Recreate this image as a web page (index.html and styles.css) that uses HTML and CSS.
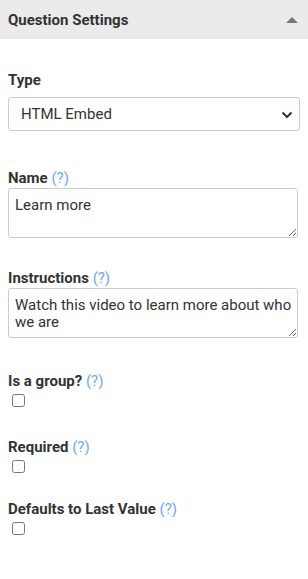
FILE: index.html
```html
<!DOCTYPE html>
<html lang="en">
<head>
  <meta charset="UTF-8">
  <meta name="viewport" content="width=device-width, initial-scale=1.0">
  <title>Question Settings</title>
  <link rel="stylesheet" href="styles.css">
</head>
<body>
  <div class="panel-header">
    <span class="panel-title">Question Settings</span>
    <span class="collapse-arrow"></span>
  </div>

  <div class="panel-body">
    <div class="field field-type">
      <label class="field-label">Type</label>
      <div class="select-wrap">
        <select class="field-select">
          <option>HTML Embed</option>
        </select>
        <svg class="chevron" width="12" height="8" viewBox="0 0 12 8">
          <path d="M1.5 1.5 L6 6 L10.5 1.5" fill="none" stroke="#333" stroke-width="2"/>
        </svg>
      </div>
    </div>

    <div class="field field-name">
      <label class="field-label">Name <span class="help">(?)</span></label>
      <textarea class="field-text">Learn more</textarea>
    </div>

    <div class="field field-instructions">
      <label class="field-label">Instructions <span class="help">(?)</span></label>
      <textarea class="field-text">Watch this video to learn more about who we are</textarea>
    </div>

    <div class="field field-check field-group">
      <label class="field-label">Is a group? <span class="help">(?)</span></label>
      <input type="checkbox" class="field-box">
    </div>

    <div class="field field-check field-required">
      <label class="field-label">Required <span class="help">(?)</span></label>
      <input type="checkbox" class="field-box">
    </div>

    <div class="field field-check field-defaults">
      <label class="field-label">Defaults to Last Value <span class="help">(?)</span></label>
      <input type="checkbox" class="field-box">
    </div>
  </div>
</body>
</html>
```

FILE: styles.css
```css
body {
  font-family: Roboto, 'Liberation Sans', sans-serif;
  margin: 0;
  background-color: #fff;
  color: #333;
}
.panel-header {
  display: flex;
  justify-content: space-between;
  align-items: center;
  height: 39px;
  padding: 0 10px 0 8px;
  background-color: #ebebeb;
}
.panel-title {
  font-size: 15px;
  font-weight: 700;
  color: #333;
}
.collapse-arrow {
  width: 0;
  height: 0;
  border-left: 6px solid transparent;
  border-right: 6px solid transparent;
  border-bottom: 6px solid #777;
}
.panel-body {
  padding: 31px 8px 0;
}
.field-label {
  display: block;
  font-size: 15px;
  font-weight: 700;
  line-height: 20px;
  color: #333;
}
.help {
  font-weight: 400;
  color: #6aa8f7;
}
.select-wrap {
  position: relative;
  margin-top: 7px;
  width: 292px;
}
.field-select {
  appearance: none;
  -webkit-appearance: none;
  display: block;
  width: 100%;
  height: 34px;
  box-sizing: border-box;
  padding: 0 30px 0 12px;
  border: 1px solid #ccc;
  border-radius: 3px;
  background-color: #fff;
  font-family: Roboto, 'Liberation Sans', sans-serif;
  font-size: 15px;
  color: #333;
}
.chevron {
  position: absolute;
  right: 7px;
  top: 14px;
}
.field-text {
  display: block;
  width: 290px;
  height: 50px;
  box-sizing: border-box;
  margin: 0;
  padding: 8px 3px 4px 6px;
  border: 1px solid #ccc;
  border-radius: 3px;
  font-family: Roboto, 'Liberation Sans', sans-serif;
  font-size: 15px;
  line-height: 17px;
  color: #333;
}
.field-name {
  margin-top: 37px;
}
.field-instructions {
  margin-top: 30px;
}
.field-group {
  margin-top: 33px;
}
.field-required {
  margin-top: 30px;
}
.field-defaults {
  margin-top: 26px;
}
.field-box {
  display: block;
  width: 13px;
  height: 13px;
  margin: 3px 0 0 4px;
}
```
